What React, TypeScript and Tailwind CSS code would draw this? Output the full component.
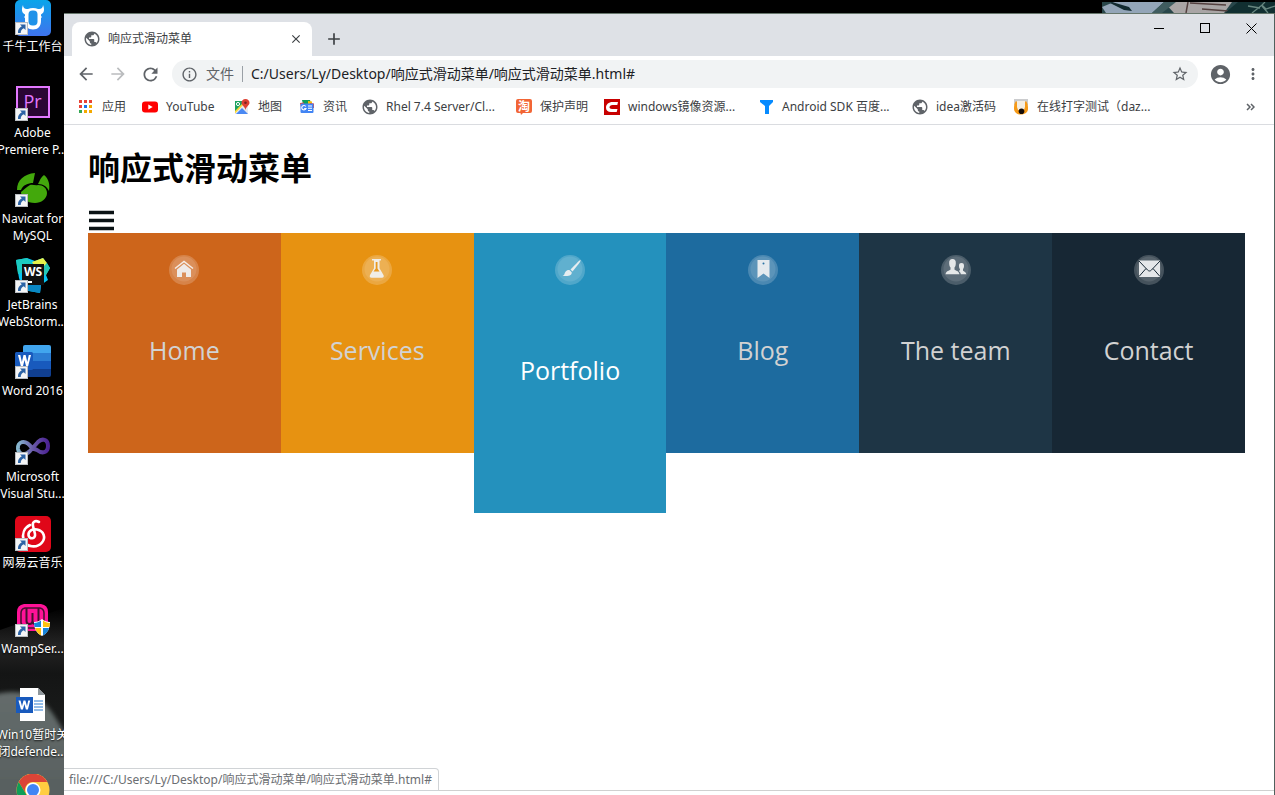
import type { ReactNode } from 'react';
import {
  MdAccountCircle,
  MdAdd,
  MdArrowBack,
  MdArrowForward,
  MdClose,
  MdInfoOutline,
  MdMoreVert,
  MdPublic,
  MdRefresh,
  MdStarBorder,
} from 'react-icons/md';

function ShortcutArrow() {
  return (
    <svg viewBox="0 0 13 13" className="absolute bottom-0 left-0 size-[13px]" aria-hidden="true">
      <rect x=".5" y=".5" width="12" height="12" fill="#f4f5f6" stroke="#b9bdc2" />
      <path d="M5 2.500h5.500V8L8.800 6.300C6.800 7.200 5.800 8.500 5.700 11L3 11C2.700 8 4.200 5.800 6.800 4.300Z" fill="#2c63a5" />
    </svg>
  );
}

const wsIcon = (
  <svg viewBox="0 0 36 36" className="size-9">
    <path d="M1 2 12 0 20 3 28 0 35 10 31 17 33 22 26 27 25 35 8 32 4 20Z" fill="#07c3f2" />
    <path d="M1 2 12 0 17 5 9 14 3 16Z" fill="#1ccbc0" />
    <path d="M17 4 28 0 32 5 29 9H20Z" fill="#e7f24b" />
    <path d="M32 5 35 10 31 17 29 17V8Z" fill="#27c7b5" />
    <path d="M8 27h18l-1 8-16-3Z" fill="#0a87c4" />
    <rect x="7" y="6" width="22" height="21" fill="#101010" />
    <rect x="9" y="23" width="8" height="2" fill="#fff" />
    <text x="18" y="18" textAnchor="middle" fontSize="12" fontWeight="700" fill="#fff" fontFamily="Open Sans, sans-serif">WS</text>
  </svg>
);

const desktopItems: { label: string[]; icon: ReactNode; shortcut: boolean }[] = [
  {
    label: ['千牛工作台'],
    shortcut: true,
    icon: (
      <svg viewBox="0 0 36 36" className="size-9">
        <defs>
          <linearGradient id="qn" x1="0" y1="0" x2="0" y2="1">
            <stop offset="0" stopColor="#0aa5ea" />
            <stop offset="1" stopColor="#3f73ee" />
          </linearGradient>
        </defs>
        <rect width="36" height="36" rx="5" fill="url(#qn)" />
        <path d="M8 5c0 3 2 4.500 5 4 3-1.500 7-1.500 10 0 3 .5 5-1 5-4 2 5 1 8-2 9.500V21c0 5-3 8.500-8 8.500S10 26 10 21v-6.500C7 13 6 10 8 5Z" fill="#fff" />
        <rect x="13.500" y="10.500" width="9" height="15" rx="4" fill="#1f92e9" />
        <path d="M9.500 17h3M23.500 17h3" stroke="#fff" strokeWidth="2" />
      </svg>
    ),
  },
  {
    label: ['Adobe', 'Premiere P...'],
    shortcut: true,
    icon: (
      <svg viewBox="0 0 36 36" className="size-9">
        <rect x="2" y="1" width="32" height="30" fill="#2a0634" stroke="#e378ff" strokeWidth="2" />
        <text x="17.500" y="22" textAnchor="middle" fontSize="18" fill="#e378ff" fontFamily="Open Sans, sans-serif">Pr</text>
      </svg>
    ),
  },
  {
    label: ['Navicat for', 'MySQL'],
    shortcut: true,
    icon: (
      <svg viewBox="0 0 36 36" className="size-9">
        <g fill="#43a80c">
          <path d="M2 18C2 8 9 2 20 1l-2 10C13 11 8 13 6 18Z" />
          <path d="M23 12C25 8 26 5 29 3c5 4 6 10 5 16-2-4-5-7-11-7Z" />
          <path d="M6 20c3-2 5-5 9-7 3-1 5 1 8 0 5 0 9 3 9 8 0 6-6 10-12 10-8 0-14-5-14-11Z" />
        </g>
      </svg>
    ),
  },
  { label: ['JetBrains', 'WebStorm...'], shortcut: true, icon: wsIcon },
  {
    label: ['Word 2016'],
    shortcut: true,
    icon: (
      <svg viewBox="0 0 36 36" className="size-9">
        <path d="M10 1h24a2 2 0 0 1 2 2v6H8V3a2 2 0 0 1 2-2Z" fill="#41a5ee" />
        <path d="M8 9h28v8H8Z" fill="#2b7cd3" />
        <path d="M8 17h28v8H8Z" fill="#185abd" />
        <path d="M8 25h28v6a2 2 0 0 1-2 2H10a2 2 0 0 1-2-2Z" fill="#103f91" />
        <rect y="8" width="18" height="18" rx="1.500" fill="#185abd" />
        <path d="m3 11 2.800 11h2.200l1.500-6 1.500 6h2.200L16 11h-2.200l-1.500 7-1.700-7H8.500l-1.600 7L5.300 11Z" fill="#fff" />
      </svg>
    ),
  },
  {
    label: ['Microsoft', 'Visual Stu...'],
    shortcut: true,
    icon: (
      <svg viewBox="0 0 36 36" className="size-9">
        <defs>
          <linearGradient id="vs">
            <stop offset="0" stopColor="#87b8cf" />
            <stop offset=".5" stopColor="#6a5aa8" />
            <stop offset="1" stopColor="#4c2394" />
          </linearGradient>
        </defs>
        <path d="M17 18C10 8 2 12 3 19c1 6 7 7 12 2l8-9c4-4 10-3 10 4s-6 8-11 4c-2-1-3-1-5-2" fill="none" stroke="url(#vs)" strokeWidth="4" />
      </svg>
    ),
  },
  {
    label: ['网易云音乐'],
    shortcut: true,
    icon: (
      <svg viewBox="0 0 36 36" className="size-9">
        <rect width="36" height="36" rx="5" fill="#e00719" />
        <path d="M24 6c-4-2-7 0-6 4l2 8c1 5-6 6-6.500 1-.3-4 4-6.500 8.500-5.500 7 1.500 9 8 5 13-5 6-16 5-18.500-2.500C7 18 9 12 15 9" fill="none" stroke="#fff" strokeWidth="2.600" strokeLinecap="round" />
      </svg>
    ),
  },
  {
    label: ['WampSer...'],
    shortcut: true,
    icon: (
      <svg viewBox="0 0 36 36" className="size-9">
        <path d="M9 2h17q7 1 7 8v13l-5 6H8l-6-6V10Q2 3 9 2Z" fill="#ff1297" />
        <path d="M10 6h15q4 1 4 5v10l-3 5H9l-3-5V11q0-4 4-5Z" fill="none" stroke="#45102f" strokeWidth="1.500" />
        <path d="M11.500 6v13c0 4 6 4 6 0v-8 8c0 4 6 4 6 0V6" fill="none" stroke="#45102f" strokeWidth="2" />
        <path d="M27 17c2 2 5 3 8 3 0 6-2 11-8 14-6-3-8-8-8-14 3 0 6-1 8-3Z" fill="#fff" />
        <path d="M26 18.500V25h-6.500l-.5-4c3 0 5-1 7-2.500ZM28 26h6c-.8 3-2.500 5.500-6 7.500Z" fill="#1684d8" />
        <path d="M28 18.500V25h6.500l.5-4c-3 0-5-1-7-2.500ZM26 26h-6c1 3 3 5.500 6 7.500Z" fill="#ffc20e" />
      </svg>
    ),
  },
  {
    label: ['Win10暂时关', '闭defende...'],
    shortcut: false,
    icon: (
      <svg viewBox="0 0 36 36" className="size-9">
        <path d="M5 0h18l7 7v26H5Z" fill="#fff" />
        <path d="M23 0v7h7Z" fill="#8f979c" />
        <path d="M19 13h9M19 16h9M19 19h9M19 22h9" stroke="#2b7cd3" strokeWidth="1" />
        <rect x="1" y="9" width="17" height="16" fill="#185abd" />
        <path d="m3.500 12.500 2.400 9h2l1.500-5.500 1.500 5.500h2l2.300-9h-2L12 18.200l-1.600-5.700H8.500l-1.500 5.700-1.500-5.700Z" fill="#fff" />
      </svg>
    ),
  },
  {
    label: [],
    shortcut: false,
    icon: (
      <svg viewBox="0 0 36 36" className="size-9">
        <circle cx="18" cy="16" r="16.500" fill="#ffcd40" />
        <path d="M3.700 8A16.500 16.500 0 0 1 32.300 8H18a8 8 0 0 0-7 12Z" fill="#db4437" />
        <path d="M3.700 8A16.500 16.500 0 0 0 14 32L22 24a8 8 0 0 1-11-4Z" fill="#0f9d58" />
        <circle cx="18" cy="16" r="7.500" fill="#fff" />
        <circle cx="18" cy="16" r="6" fill="#4285f4" />
      </svg>
    ),
  },
];

function Desktop() {
  return (
    <aside className="relative h-full w-16 shrink-0 overflow-hidden">
      <svg viewBox="0 0 64 195" preserveAspectRatio="none" className="absolute bottom-0 left-0 h-[195px] w-16" aria-hidden="true">
        <defs>
          <linearGradient id="wall" x1="0" y1="0" x2="0" y2="1">
            <stop offset="0" stopColor="#000" />
            <stop offset=".2" stopColor="#242424" />
            <stop offset=".35" stopColor="#141515" />
            <stop offset="1" stopColor="#222423" />
          </linearGradient>
          <linearGradient id="disc" x1="0" y1="0" x2="0" y2="1">
            <stop offset="0" stopColor="#646c6b" />
            <stop offset="1" stopColor="#565e5e" />
          </linearGradient>
          <filter id="soft" x="-20%" y="-20%" width="140%" height="140%">
            <feGaussianBlur stdDeviation="2" />
          </filter>
        </defs>
        <path d="M0 30 64 8V195H0Z" fill="url(#wall)" />
        <path d="M-10 96C12 88 38 92 50 110c8 10 16 26 24 40V210H-10Z" fill="url(#disc)" filter="url(#soft)" />
      </svg>
      <ul className="relative flex flex-col pl-px">
        {desktopItems.map((item, i) => (
          <li key={i} className="flex h-[86px] shrink-0 flex-col items-center font-['Noto_Sans','Noto_Sans_CJK_SC',sans-serif] text-xs leading-[17px] text-white">
            <span className="relative mb-[3px] size-[35px] shrink-0">
              {item.icon}
              {item.shortcut && <ShortcutArrow />}
            </span>
            {item.label.map((line) => (
              <span key={line} className="whitespace-nowrap [text-shadow:0_1px_2px_#000]">{line}</span>
            ))}
          </li>
        ))}
      </ul>
    </aside>
  );
}

const globe = <MdPublic className="size-[18px] shrink-0 text-[#5f6368]" />;

const bookmarks: { label: string; width: string; icon: ReactNode }[] = [
  {
    label: '应用',
    width: 'w-16',
    icon: (
      <svg viewBox="0 0 16 16" className="size-4">
        <path d="M1 1h3v3H1zM6 1h3v3H6zM11 1h3v3h-3zM1 6h3v3H1z" fill="#ea4335" />
        <path d="M6 6h3v3H6z" fill="#1a73e8" />
        <path d="M11 6h3v3h-3zM6 11h3v3H6zM11 11h3v3h-3z" fill="#f4a900" />
        <path d="M1 11h3v3H1z" fill="#34a853" />
      </svg>
    ),
  },
  {
    label: 'YouTube',
    width: 'w-[92px]',
    icon: (
      <svg viewBox="0 0 16 16" className="size-4">
        <rect y="2.500" width="16" height="11" rx="3" fill="#f00" />
        <path d="m6.300 5.600 4.400 2.400-4.400 2.400Z" fill="#fff" />
      </svg>
    ),
  },
  {
    label: '地图',
    width: 'w-[65px]',
    icon: (
      <svg viewBox="0 0 16 16" className="size-4">
        <path d="M1 2h13v13H1Z" fill="#e8eaed" />
        <path d="M1 2h10L1 13Z" fill="#1da261" />
        <path d="m2 15 6-6 6 6Z" fill="#4a89f3" />
        <path d="M1 12 11 2h2L1 14.500Z" fill="#fdd835" />
        <circle cx="4" cy="5" r="1.600" fill="none" stroke="#fff" />
        <path d="M11.500 0C14 0 15.500 1.800 15.500 3.700c0 2.600-3.500 3.800-4 7.300-.5-3.500-4-4.700-4-7.300C7.500 1.800 9 0 11.500 0Z" fill="#de4032" />
        <circle cx="11.500" cy="3.700" r="1.300" fill="#7a211b" />
      </svg>
    ),
  },
  {
    label: '资讯',
    width: 'w-[63px]',
    icon: (
      <svg viewBox="0 0 16 16" className="size-4">
        <path d="M3 1h8l1 4H4Z" fill="#0f9d58" />
        <path d="m9 2 4 .5V6H9Z" fill="#fbbc04" />
        <path d="m1 4 4-.5V9H2ZM11 4l4 .5V9h-4Z" fill="#ea4335" />
        <rect x="1.500" y="4.500" width="13" height="9.500" rx="1" fill="#4285f4" />
        <path d="M6.800 7.500A2.200 2.200 0 1 0 7 9.500H5.200M9 7h4M9 9.200h4M9 11.500h4" fill="none" stroke="#fff" strokeWidth="1.100" />
      </svg>
    ),
  },
  { label: 'Rhel 7.4 Server/Cl...', width: 'w-[154px]', icon: globe },
  {
    label: '保护声明',
    width: 'w-[88px]',
    icon: (
      <svg viewBox="0 0 16 16" className="size-4">
        <path d="M2 0h12a2 2 0 0 1 2 2v10a2 2 0 0 1-2 2H7l-2 2-.5-2H2a2 2 0 0 1-2-2V2a2 2 0 0 1 2-2Z" fill="#f26535" />
        <text x="8" y="11.500" textAnchor="middle" fontSize="12" fontWeight="700" fill="#fff" fontFamily="Noto Sans CJK SC, sans-serif">淘</text>
      </svg>
    ),
  },
  {
    label: 'windows镜像资源...',
    width: 'w-[154px]',
    icon: (
      <svg viewBox="0 0 16 16" className="size-4">
        <path d="M0 0h16v16H0Z" fill="#c80000" />
        <path d="m14 3-.7 3H8.500C6.500 6 5.500 7 5.500 8.300S6.500 10 8 10h5.500l-.8 3H7C3.700 13 2 11.300 2 8.800 2 5.200 4.800 3 8.500 3Z" fill="#fff" />
      </svg>
    ),
  },
  {
    label: 'Android SDK 百度...',
    width: 'w-[154px]',
    icon: (
      <svg viewBox="0 0 16 16" className="size-4">
        <path d="M2 1h13v2l-4 4v8H7V7L2 3Z" fill="#078bff" />
      </svg>
    ),
  },
  { label: 'idea激活码', width: 'w-[101px]', icon: globe },
  {
    label: '在线打字测试（daz...',
    width: 'w-40',
    icon: (
      <svg viewBox="0 0 16 16" className="size-4">
        <path d="M1 0h14v6H1Z" fill="#cbccce" />
        <path d="M3 2C1 5 1 7 1 10c0 3 3 5.500 7 5.500s7-2.500 7-5.500c0-3 0-5-2-8l-1 1v5H4V3Z" fill="#f69a18" />
        <path d="M4 2h8v6l-1 3H5L4 8Z" fill="#f5eee2" />
        <circle cx="8.500" cy="12.300" r="2.800" fill="#150d09" />
      </svg>
    ),
  },
];

const menu: { label: string; color: string; active?: boolean; glyph: ReactNode }[] = [
  {
    label: 'Home',
    color: 'bg-[#cd651b]',
    glyph: (
      <>
        <path d="m6 13.500 9-7 9 7" fill="none" stroke="#f5ece5" strokeWidth="1.500" />
        <path d="m15 8.800 7 5.700V22h-5v-4.500h-4V22H8v-7.500Z" />
      </>
    ),
  },
  {
    label: 'Services',
    color: 'bg-[#e79211]',
    glyph: (
      <>
        <path d="M10 4h9v1.500h-1.500v7.700l4 6.800c.7 1.500 0 2.700-1.500 2.700H9.500C8 22.700 7.300 21.500 8 20l4-6.800V5.500h-2Z" />
        <path d="M13.700 7h1.800v6.500l2 3h-6l2.200-3Z" fill="#e79211" />
      </>
    ),
  },
  {
    label: 'Portfolio',
    color: 'bg-[#2491bd]',
    active: true,
    glyph: <path d="M25.500 5c.5 1-.5 2.500-8 11.500l-2-2C22 8 24.500 5 25.500 5ZM14.700 15.200l2 2c.5 3-2.500 4.200-9.200 3.500 2.500-.7 1.500-2 3-4 1-1.300 2.500-1.800 4.200-1.500Z" />,
  },
  {
    label: 'Blog',
    color: 'bg-[#1d6b9f]',
    glyph: (
      <>
        <path d="M9.500 5h12v18l-6-4.500-6 4.500Z" />
        <circle cx="15.500" cy="8.500" r="1" fill="#1d6b9f" />
      </>
    ),
  },
  {
    label: 'The team',
    color: 'bg-[#1e3545]',
    glyph: (
      <>
        <path d="M11.500 4c2.500 0 3.500 1.500 3.300 4.500-.1 2-.5 3-1.300 4v2c1 1.200 4.500 1.500 5 4.700H4.500c.5-3.200 4-3.500 5-4.700v-2c-.8-1-1.200-2-1.300-4C8 5.500 9 4 11.500 4Z" />
        <path d="M20.500 8c2 0 2.700 1.200 2.500 3.300-.1 1.500-.5 2.200-1 2.900v1.500c1 .8 3 1.200 3.300 3.500h-5.500c-.2-1.500-.7-2.500-2-3.300.7-.3 1.200-.7 1.200-1.700-.6-.7-.9-1.400-1-2.900C17.800 9.200 18.500 8 20.500 8Z" />
      </>
    ),
  },
  {
    label: 'Contact',
    color: 'bg-[#172734]',
    glyph: (
      <>
        <path d="M5 5.500h21v16.500H5Z" />
        <path d="m5 6 8.500 9c1.300 1.300 2.700 1.300 4 0L26 6M5 21.500l7-8M26 21.500l-7-8" fill="none" stroke="#172734" strokeWidth="1" />
      </>
    ),
  },
];

function TitleBar() {
  return (
    <header className="flex h-[42px] shrink-0 bg-[#dee1e6] pl-2">
      <div className="mt-2 flex w-60 items-center rounded-t-lg bg-white pr-2 pl-[11px]">
        {globe}
        <span className="ml-[7px] flex-1 text-xs text-[#3c4043]">响应式滑动菜单</span>
        <button aria-label="关闭标签页" className="flex size-4 items-center justify-center text-[#3c4043]">
          <MdClose className="size-[14px]" />
        </button>
      </div>
      <button aria-label="新标签页" className="mt-2 ml-3 flex h-[34px] w-5 items-center justify-center text-[#3c4043]">
        <MdAdd className="size-5" />
      </button>
      <div className="ml-auto flex h-7">
        <button aria-label="最小化" className="flex w-[46px] items-center justify-center">
          <svg viewBox="0 0 11 11" className="size-[11px]"><path d="M0 5.500h10" stroke="#000" /></svg>
        </button>
        <button aria-label="最大化" className="flex w-[46px] items-center justify-center">
          <svg viewBox="0 0 11 11" className="size-[11px]"><rect x=".5" y=".5" width="9" height="9" fill="none" stroke="#000" /></svg>
        </button>
        <button aria-label="关闭" className="flex w-[46px] items-center justify-center">
          <svg viewBox="0 0 11 11" className="size-[11px]"><path d="m.5.5 10 10m0-10-10 10" stroke="#000" /></svg>
        </button>
      </div>
    </header>
  );
}

function Toolbar() {
  return (
    <div className="flex h-9 shrink-0 items-center px-3 text-[#5f6368]">
      <div className="flex w-24 gap-3">
        <button aria-label="后退"><MdArrowBack className="size-5" /></button>
        <button aria-label="前进" className="text-[#babcbe]"><MdArrowForward className="size-5" /></button>
        <button aria-label="刷新"><MdRefresh className="size-[21px]" /></button>
      </div>
      <div className="flex h-7 flex-1 items-center rounded-full bg-[#f1f3f4] px-[9px]">
        <MdInfoOutline className="size-[17px] shrink-0" />
        <label htmlFor="address" className="ml-2 shrink-0 text-sm">文件</label>
        <span className="mx-2 h-4 w-px shrink-0 bg-[#9aa0a6]" />
        <input
          id="address"
          defaultValue="C:/Users/Ly/Desktop/响应式滑动菜单/响应式滑动菜单.html#"
          className="min-w-0 flex-1 bg-transparent font-['Noto_Sans','Noto_Sans_CJK_SC',sans-serif] text-sm text-[#202124] outline-none"
        />
        <button aria-label="收藏"><MdStarBorder className="size-[18px]" /></button>
      </div>
      <button aria-label="用户" className="ml-[11px]"><MdAccountCircle className="size-[23px]" /></button>
      <button aria-label="更多" className="ml-3"><MdMoreVert className="size-[18px]" /></button>
    </div>
  );
}

function BookmarkBar() {
  return (
    <nav aria-label="书签" className="flex h-[33px] shrink-0 items-center border-b border-[#dadce0] pb-[3px] pl-[14px] font-['Noto_Sans','Noto_Sans_CJK_SC',sans-serif] text-xs text-[#3c4043]">
      {bookmarks.map((b) => (
        <a key={b.label} href="#" className={`flex shrink-0 items-center gap-2 whitespace-nowrap ${b.width}`}>
          <span className="flex size-4 shrink-0 items-center justify-center">{b.icon}</span>
          {b.label}
        </a>
      ))}
      <button aria-label="更多书签" className="mr-[19px] ml-auto">
        <svg viewBox="0 0 9 8" className="h-2 w-[9px]">
          <path d="m1 1 3 3-3 3m4-6 3 3-3 3" fill="none" stroke="#5f6368" strokeWidth="1.500" />
        </svg>
      </button>
    </nav>
  );
}

function Page() {
  return (
    <main className="min-h-0 flex-1 bg-white pr-[29px] pl-6">
      <h1 className="pt-[21px] text-[32px] leading-[44px] font-bold text-black">响应式滑动菜单</h1>
      <button aria-label="菜单" className="mt-[19px] block">
        <svg viewBox="0 0 27 24" className="h-6 w-[27px]">
          <path d="M1 3.500h25M1 11.500h25M1 19.500h25" stroke="#0a1214" strokeWidth="3.500" />
        </svg>
      </button>
      <ul className="grid grid-cols-6 items-start">
        {menu.map((m) => (
          <li key={m.label}>
            <a
              href="#"
              className={`flex flex-col items-center pt-[22px] text-[25px] leading-[34px] ${m.color} ${m.active ? 'h-[280px] gap-[68px] text-white' : 'h-[220px] gap-12 text-[#d2d2d2]'}`}
            >
              <svg viewBox="0 0 30 30" className="size-[30px] shrink-0" fill="#f0f1f2" fillOpacity=".93" aria-hidden="true">
                <circle cx="15" cy="15" r="15" fill="#fff" fillOpacity=".2" />
                <circle cx="15" cy="14" r="12.500" fill="#fff" fillOpacity=".1" />
                {m.glyph}
              </svg>
              {m.label}
            </a>
          </li>
        ))}
      </ul>
    </main>
  );
}

export default function App() {
  return (
    <div className="flex h-screen overflow-hidden bg-black font-['Open_Sans','Noto_Sans_CJK_SC',sans-serif]">
      <Desktop />
      <div className="flex min-w-0 flex-1 flex-col">
        <div className="flex h-[13px] shrink-0 justify-end pt-0.5">
          <svg viewBox="0 0 173 11" className="h-[11px] w-[173px]" aria-hidden="true">
            <path d="M0 0h173v11H0Z" fill="#28464a" />
            <path d="M0 5 12 0h50L50 11H4Z" fill="#93a5b8" />
            <path d="M10 0 27 5 30 9 22 8 8 1Z" fill="#122a30" />
            <path d="M62 0h68l-8 11H72Z" fill="#a9a5a5" />
            <path d="m62 0 12 0-14 11H50Z" fill="#3f5c5f" />
            <path d="m86 0-2 11m16-4 26 2M88 1l36 2" stroke="#53403f" strokeWidth="1.500" />
            <path d="M136 0h37v11h-50Z" fill="#112f31" />
            <path d="m150 11 10-8 4 4 9-3M158 6l-12-2m14-1 3-3m-3 4 6 7" fill="none" stroke="#688780" strokeWidth="1.300" />
          </svg>
        </div>
        <div className="relative flex min-h-0 flex-1 flex-col border-t border-r border-t-[#66766b] border-r-[#50605d] bg-white">
          <TitleBar />
          <Toolbar />
          <BookmarkBar />
          <Page />
          <div className="h-[5px] shrink-0 border-t border-[#d0d0d0] bg-white" />
          <div className="absolute bottom-1 left-0 rounded-tr border border-l-0 border-[#d0d3d6] bg-white pt-0.5 pr-1.5 pb-px pl-[5px] font-['Noto_Sans','Noto_Sans_CJK_SC',sans-serif] text-xs leading-[18px] text-[#6b6e72]">
            file:///C:/Users/Ly/Desktop/响应式滑动菜单/响应式滑动菜单.html#
          </div>
        </div>
      </div>
    </div>
  );
}
